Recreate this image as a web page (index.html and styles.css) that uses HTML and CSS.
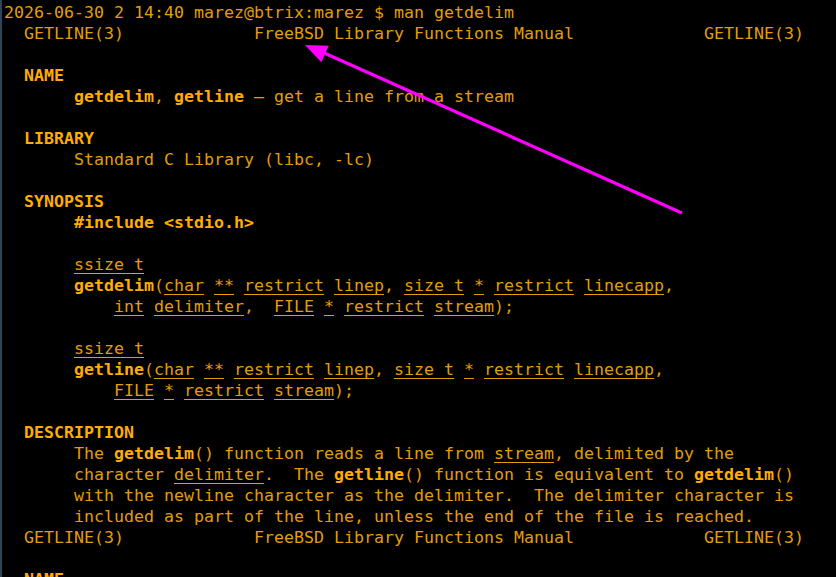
FILE: index.html
```html
<!DOCTYPE html>
<html>
<head>
<meta charset="utf-8">
<link rel="stylesheet" href="styles.css">
</head>
<body>
<div class="term">
<pre class="screen">2026-06-30 2 14:40 marez@btrix:marez $ man getdelim
  GETLINE(3)             FreeBSD Library Functions Manual             GETLINE(3)

  <span class="b">NAME</span>
       <span class="b">getdelim</span>, <span class="b">getline</span> – get a line from a stream

  <span class="b">LIBRARY</span>
       Standard C Library (libc, -lc)

  <span class="b">SYNOPSIS</span>
       <span class="b">#include &lt;stdio.h&gt;</span>

       <span class="u">ssize_t</span>
       <span class="b">getdelim</span>(<span class="u">char</span> <span class="u">**</span> <span class="u">restrict</span> <span class="u">linep</span>, <span class="u">size_t</span> <span class="u">*</span> <span class="u">restrict</span> <span class="u">linecapp</span>,
           <span class="u">int</span> <span class="u">delimiter</span>,  <span class="u">FILE</span> <span class="u">*</span> <span class="u">restrict</span> <span class="u">stream</span>);

       <span class="u">ssize_t</span>
       <span class="b">getline</span>(<span class="u">char</span> <span class="u">**</span> <span class="u">restrict</span> <span class="u">linep</span>, <span class="u">size_t</span> <span class="u">*</span> <span class="u">restrict</span> <span class="u">linecapp</span>,
           <span class="u">FILE</span> <span class="u">*</span> <span class="u">restrict</span> <span class="u">stream</span>);

  <span class="b">DESCRIPTION</span>
       The <span class="b">getdelim</span>() function reads a line from <span class="u">stream</span>, delimited by the
       character <span class="u">delimiter</span>.  The <span class="b">getline</span>() function is equivalent to <span class="b">getdelim</span>()
       with the newline character as the delimiter.  The delimiter character is
       included as part of the line, unless the end of the file is reached.
  GETLINE(3)             FreeBSD Library Functions Manual             GETLINE(3)

  <span class="b">NAME</span></pre>
<svg class="arrow" width="836" height="577" viewBox="0 0 836 577" xmlns="http://www.w3.org/2000/svg">
  <line x1="682" y1="213" x2="322" y2="52" stroke="#ff00ff" stroke-width="3.2"/>
  <polygon points="305,45 321.4,62.2 328.8,45.8" fill="#ff00ff"/>
</svg>
</div>
</body>
</html>
```
FILE: styles.css
```css
html, body {
  margin: 0;
  padding: 0;
  background: #000;
  width: 836px;
  height: 577px;
  overflow: hidden;
}

.term {
  position: relative;
  width: 834px;
  height: 577px;
  border-left: 2px solid #2a4657;
  background: #000;
  overflow: hidden;
}

.screen {
  margin: 0;
  padding: 2px 0 0 2px;
  font-family: "DejaVu Sans Mono", monospace;
  font-size: 16.61px;
  line-height: 21px;
  color: #e39e00;
  white-space: pre;
}

.b {
  font-weight: bold;
  color: #ffad00;
}

.u {
  text-decoration: underline;
  text-decoration-thickness: 1px;
  text-underline-offset: 3px;
}

.arrow {
  position: absolute;
  left: -2px;
  top: 0;
}
```
